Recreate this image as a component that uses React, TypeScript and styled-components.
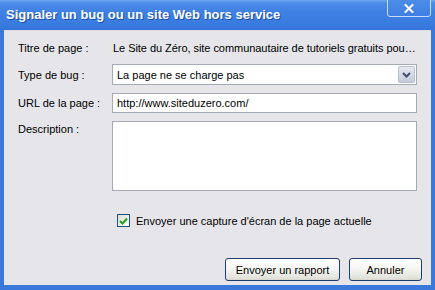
import React from 'react';
import styled, { createGlobalStyle } from 'styled-components';

const GlobalStyle = createGlobalStyle`
  html, body {
    margin: 0;
    padding: 0;
    background: #fff;
  }
  body {
    font-family: 'Liberation Sans', Arial, sans-serif;
    font-size: 11px;
    color: #000;
  }
`;

const Window = styled.div`
  width: 435px;
  height: 290px;
  display: flex;
  flex-direction: column;
  overflow: hidden;
  background: #3a78dc;
`;

const TitleBar = styled.div`
  height: 30px;
  flex: none;
  display: flex;
  align-items: flex-start;
  justify-content: space-between;
  padding: 0 4px 0 6px;
  box-sizing: border-box;
  background: linear-gradient(
    to bottom,
    #6fa6ef 0px,
    #4b8ce8 3px,
    #3f81e3 12px,
    #3a7be0 24px,
    #3674da 30px
  );
`;

const Title = styled.div`
  margin-top: 7px;
  font-family: 'Liberation Sans', Arial, sans-serif;
  font-weight: bold;
  font-size: 13px;
  color: #fff;
  text-shadow: 1px 1px 0 #1d4fa8;
`;

const CloseButton = styled.div`
  width: 44px;
  height: 21px;
  margin-top: -4px;
  box-sizing: border-box;
  border: 1px solid #c8dcf8;
  border-radius: 3px;
  background: linear-gradient(to bottom, #4f8fe9, #3f7fe2);
  display: flex;
  align-items: center;
  justify-content: center;
  padding-top: 4px;
`;

const Frame = styled.div`
  flex: 1;
  display: flex;
  flex-direction: column;
  margin: 0 4px 5px 4px;
  background: #e6e6ea;
  border-top: 1px solid #dcdde2;
`;

const Form = styled.div`
  display: grid;
  grid-template-columns: 94px 1fr;
  row-gap: 8px;
  padding: 8px 14px 0 14px;
`;

const Label = styled.div<{ $top?: boolean }>`
  display: flex;
  align-items: ${(p) => (p.$top ? 'flex-start' : 'center')};
  padding-top: ${(p) => (p.$top ? '2px' : '0')};
  white-space: nowrap;
`;

const Value = styled.div`
  height: 17px;
  display: flex;
  align-items: center;
  white-space: nowrap;
  padding-left: 1px;
  letter-spacing: -0.05px;
`;

const Field = styled.div<{ $h: number }>`
  height: ${(p) => p.$h}px;
  box-sizing: border-box;
  border: 1px solid #a5abb4;
  background: #fff;
  display: flex;
  align-items: ${(p) => (p.$h > 30 ? 'flex-start' : 'center')};
  padding-left: 4px;
  white-space: nowrap;
`;

const SelectBox = styled(Field)`
  justify-content: space-between;
  padding-right: 1px;
`;

const DropButton = styled.div`
  width: 17px;
  height: 17px;
  box-sizing: border-box;
  border: 1px solid #b7c0d0;
  border-radius: 2px;
  background: linear-gradient(to bottom, #e4e8f0, #c3cbda);
  display: flex;
  align-items: center;
  justify-content: center;
`;

const CheckRow = styled.label`
  display: flex;
  align-items: center;
  gap: 6px;
  margin: 23px 0 0 113px;
`;

const CheckBox = styled.div`
  width: 13px;
  height: 13px;
  box-sizing: border-box;
  border: 1px solid #1c5180;
  background: linear-gradient(135deg, #dcdcd6, #ffffff);
  display: flex;
  align-items: center;
  justify-content: center;
`;

const ButtonRow = styled.div`
  margin-top: auto;
  display: flex;
  justify-content: flex-end;
  gap: 9px;
  padding: 0 9px 4px 0;
`;

const Button = styled.div<{ $w: number }>`
  width: ${(p) => p.$w}px;
  height: 23px;
  box-sizing: border-box;
  border: 1px solid #1f3c6e;
  border-radius: 3px;
  background: linear-gradient(to bottom, #ffffff 0%, #f4f4f0 50%, #e3e3dd 90%, #d6d6ce 100%);
  display: flex;
  align-items: center;
  justify-content: center;
  white-space: nowrap;
`;

export default function App() {
  return (
    <>
      <GlobalStyle />
      <Window>
        <TitleBar>
          <Title>Signaler un bug ou un site Web hors service</Title>
          <CloseButton>
            <svg width="10" height="9" viewBox="0 0 10 9">
              <path
                d="M1.5 1 L8.5 8 M8.5 1 L1.5 8"
                stroke="#fff"
                strokeWidth="2"
                strokeLinecap="square"
              />
            </svg>
          </CloseButton>
        </TitleBar>
        <Frame>
          <Form>
            <Label>Titre de page :</Label>
            <Value>Le Site du Zéro, site communautaire de tutoriels gratuits pou…</Value>
            <Label>Type de bug :</Label>
            <SelectBox $h={21}>
              <span>La page ne se charge pas</span>
              <DropButton>
                <svg width="9" height="6" viewBox="0 0 9 6">
                  <path d="M1 1 L4.5 4.5 L8 1" fill="none" stroke="#3f4f6e" strokeWidth="2" />
                </svg>
              </DropButton>
            </SelectBox>
            <Label>URL de la page :</Label>
            <Field $h={20}>http://www.siteduzero.com/</Field>
            <Label $top>Description :</Label>
            <Field $h={70} />
          </Form>
          <CheckRow>
            <CheckBox>
              <svg width="9" height="8" viewBox="0 0 9 8">
                <path d="M1 4 L3.5 6.5 L8 1.5" fill="none" stroke="#21a121" strokeWidth="2" />
              </svg>
            </CheckBox>
            <span>Envoyer une capture d'écran de la page actuelle</span>
          </CheckRow>
          <ButtonRow>
            <Button $w={115}>Envoyer un rapport</Button>
            <Button $w={73}>Annuler</Button>
          </ButtonRow>
        </Frame>
      </Window>
    </>
  );
}
